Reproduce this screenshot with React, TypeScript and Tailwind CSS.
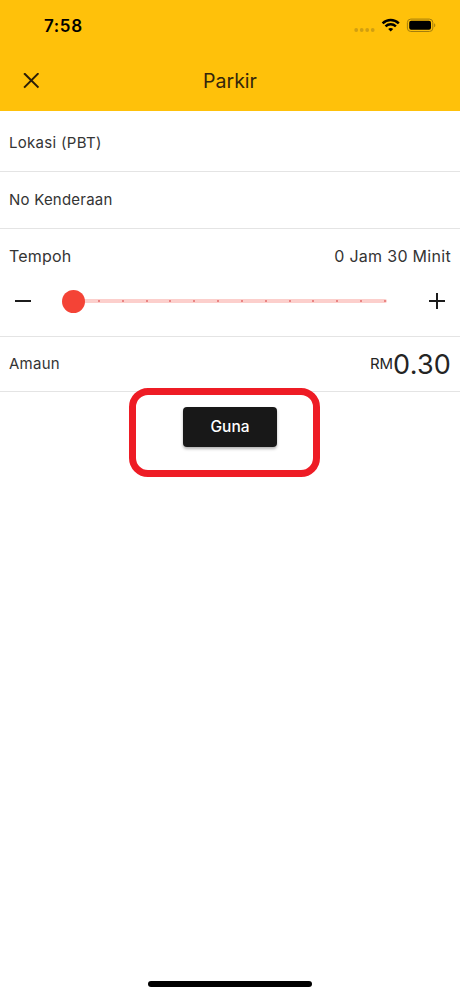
import { ReactNode } from "react";

const TICKS = Array.from({ length: 13 }, (_, i) => i);

function StatusBar() {
  return (
    <div className="flex h-[50px] items-center justify-between pl-[44px] pr-[23px] pt-[2px] text-black">
      <span className="text-[17px] font-semibold leading-5 tracking-[0.6px]">7:58</span>
      <svg width="84" height="16" viewBox="0 0 84 16" fill="none">
        <g fill="#d19f10">
          <circle cx="3.2" cy="12" r="1.9" />
          <circle cx="8.7" cy="12" r="1.9" />
          <circle cx="14.2" cy="12" r="1.9" />
          <circle cx="19.7" cy="12" r="1.9" />
        </g>
        <g stroke="currentColor" strokeWidth="2.5">
          <path d="M29.6 5.3C34.3.8 41.1.8 45.8 5.3" />
          <path d="M32.5 8.4c3-2.8 7.4-2.8 10.4 0" />
        </g>
        <path d="M37.7 13.6l-2.5-2.6c1.4-1.3 3.6-1.3 5 0z" fill="currentColor" />
        <rect x="54.4" y="1.1" width="25.4" height="12.4" rx="3.4" stroke="#a47d0c" />
        <rect x="56.2" y="2.8" width="21.8" height="9" rx="2" fill="currentColor" />
        <path d="M81.2 5.3c1.5.6 1.5 3.4 0 4z" fill="#a47d0c" />
      </svg>
    </div>
  );
}

function Header() {
  return (
    <header className="h-[111px] bg-[#ffc10a]">
      <StatusBar />
      <div className="grid h-[61px] grid-cols-[62px_1fr_62px] items-center">
        <button className="flex justify-center" aria-label="Tutup">
          <svg width="16" height="16" viewBox="0 0 16 16" stroke="#2b1e08" strokeWidth="2">
            <path d="M1.1.2l14.4 14.4M15.5.2L1.1 14.6" />
          </svg>
        </button>
        <h1 className="pt-[2px] text-center text-[19.5px] text-[#33260c]">Parkir</h1>
      </div>
    </header>
  );
}

function Row({ className, children }: { className: string; children: ReactNode }) {
  return (
    <div className={`flex items-center justify-between border-b border-[#e4e4e4] px-[9px] ${className}`}>
      {children}
    </div>
  );
}

function DurationSlider() {
  return (
    <div className="flex h-[30px] items-center">
      <button className="ml-[6px] w-4" aria-label="Kurang">
        <div className="h-[2px] w-4 bg-[#1c1c1c]" />
      </button>
      <div className="relative ml-[42px] flex h-1 w-[314px] items-center justify-between rounded-full bg-[#fccfcc] pl-[25px] pr-px">
        {TICKS.map((tick) => (
          <span key={tick} className="size-[2px] rounded-full bg-[#e46c6c]" />
        ))}
        <span className="absolute -left-[11.5px] -top-[9.5px] size-[23px] rounded-full bg-[#f44336]" />
      </div>
      <button className="ml-[42px]" aria-label="Tambah">
        <svg width="16" height="16" viewBox="0 0 16 16" stroke="#1c1c1c" strokeWidth="2">
          <path d="M0 8h16M8 0v16" />
        </svg>
      </button>
    </div>
  );
}

export default function App() {
  return (
    <div className="flex h-[996px] w-[460px] flex-col overflow-hidden bg-white font-['Inter',sans-serif] text-[15px] text-[#343434]">
      <Header />
      <Row className="h-[61px] pt-1">
        <span className="tracking-[0.3px]">Lokasi (PBT)</span>
      </Row>
      <Row className="h-[57px]">
        <span className="tracking-[0.22px]">No Kenderaan</span>
      </Row>
      <section className="h-[108px] border-b border-[#e4e4e4] px-[9px] pt-[15px]">
        <div className="flex h-6 items-center justify-between text-[16px]">
          <span className="tracking-[0.2px]">Tempoh</span>
          <span className="tracking-[0.3px]">0 Jam 30 Minit</span>
        </div>
        <div className="pt-[18px]">
          <DurationSlider />
        </div>
      </section>
      <Row className="h-[55px]">
        <span className="tracking-[0.25px]">Amaun</span>
        <span className="flex items-center text-[#242424]">
          <span>RM</span>
          <span className="pt-[2px] text-[27px] leading-8 tracking-[0.2px]">0.30</span>
        </span>
      </Row>
      <main className="relative flex flex-1 justify-center pt-[15px]">
        <button className="h-10 w-[94px] rounded bg-[#181818] text-[15.5px] font-medium text-white shadow-[0_2px_3px_rgba(0,0,0,0.3)]">
          Guna
        </button>
        <div className="absolute -top-1 left-[129px] h-[89px] w-[191px] rounded-[19px] border-[7px] border-[#ee1c25]" />
      </main>
      <footer className="flex h-[15px] justify-center">
        <div className="h-[6px] w-[164px] rounded-full bg-black" />
      </footer>
    </div>
  );
}
